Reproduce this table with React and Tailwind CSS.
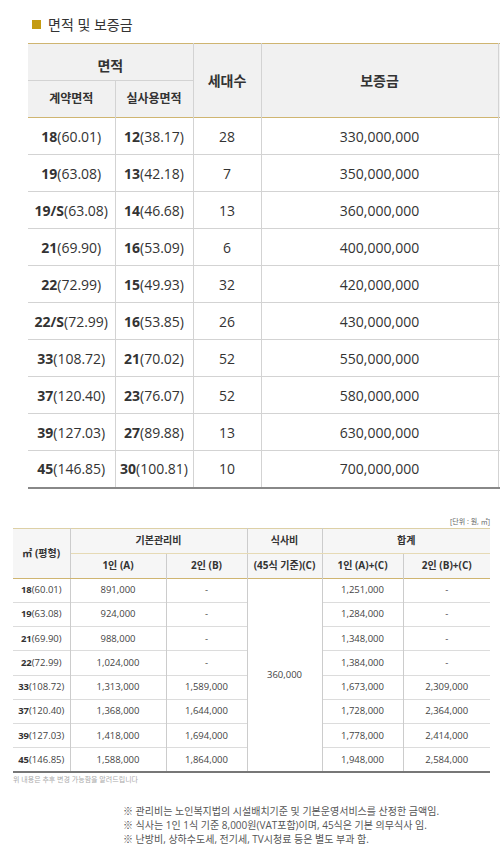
const areas = [
  { a: "18", aa: "60.01", b: "12", bb: "38.17", n: 28, dep: "330,000,000" },
  { a: "19", aa: "63.08", b: "13", bb: "42.18", n: 7, dep: "350,000,000" },
  { a: "19/S", aa: "63.08", b: "14", bb: "46.68", n: 13, dep: "360,000,000" },
  { a: "21", aa: "69.90", b: "16", bb: "53.09", n: 6, dep: "400,000,000" },
  { a: "22", aa: "72.99", b: "15", bb: "49.93", n: 32, dep: "420,000,000" },
  { a: "22/S", aa: "72.99", b: "16", bb: "53.85", n: 26, dep: "430,000,000" },
  { a: "33", aa: "108.72", b: "21", bb: "70.02", n: 52, dep: "550,000,000" },
  { a: "37", aa: "120.40", b: "23", bb: "76.07", n: 52, dep: "580,000,000" },
  { a: "39", aa: "127.03", b: "27", bb: "89.88", n: 13, dep: "630,000,000" },
  { a: "45", aa: "146.85", b: "30", bb: "100.81", n: 10, dep: "700,000,000" },
];

const fees = [
  { a: "18", aa: "60.01", one: "891,000", two: "-", t1: "1,251,000", t2: "-" },
  { a: "19", aa: "63.08", one: "924,000", two: "-", t1: "1,284,000", t2: "-" },
  { a: "21", aa: "69.90", one: "988,000", two: "-", t1: "1,348,000", t2: "-" },
  { a: "22", aa: "72.99", one: "1,024,000", two: "-", t1: "1,384,000", t2: "-" },
  { a: "33", aa: "108.72", one: "1,313,000", two: "1,589,000", t1: "1,673,000", t2: "2,309,000" },
  { a: "37", aa: "120.40", one: "1,368,000", two: "1,644,000", t1: "1,728,000", t2: "2,364,000" },
  { a: "39", aa: "127.03", one: "1,418,000", two: "1,694,000", t1: "1,778,000", t2: "2,414,000" },
  { a: "45", aa: "146.85", one: "1,588,000", two: "1,864,000", t1: "1,948,000", t2: "2,584,000" },
];

function App() {
  return (
    <div
      className="w-[500px] overflow-hidden bg-white text-[#333]"
      style={{ fontFamily: '"Open Sans", "Noto Sans CJK KR", sans-serif' }}
    >
      <div className="flex items-center gap-[7px] pl-[32px] pt-[15px] h-[43px] pb-[9px]">
        <span className="h-[9px] w-[9px] bg-[#c49b12]" />
        <h2 className="text-[14px] leading-none text-[#333]">면적 및 보증금</h2>
      </div>

      <div className="pl-[28px]">
        <table className="w-[540px] table-fixed border-collapse text-center">
          <colgroup>
            <col className="w-[87px]" />
            <col className="w-[78px]" />
            <col className="w-[68px]" />
            <col className="w-[237px]" />
            <col className="w-[70px]" />
          </colgroup>
          <thead className="bg-[#f1f1f1]">
            <tr className="h-[37px] border-t border-[#cfb571]">
              <th colSpan={2} className="border-r border-b border-[#d3d3d3] pt-[6px] text-[14px] font-bold">
                면적
              </th>
              <th rowSpan={2} className="border-x border-[#d3d3d3] text-[14px] font-bold">
                세대수
              </th>
              <th rowSpan={2} className="border-x border-[#d3d3d3] text-[14px] font-bold">
                보증금
              </th>
              <th rowSpan={2} className="border-l border-[#d3d3d3]" />
            </tr>
            <tr className="h-[37px] border-b border-[#cfb571]">
              <th className="border-r border-[#d3d3d3] text-[12px] font-bold">계약면적</th>
              <th className="border-r border-[#d3d3d3] text-[12px] font-bold">실사용면적</th>
            </tr>
          </thead>
          <tbody className="text-[14px]">
            {areas.map((r, i) => (
              <tr
                key={r.a + r.aa}
                className={`h-[37px] ${
                  i === areas.length - 1 ? "border-b-2 border-[#888]" : "border-b border-[#d3d3d3]"
                }`}
              >
                <td className="border-r border-[#d3d3d3]">
                  <b>{r.a}</b>({r.aa})
                </td>
                <td className="border-r border-[#d3d3d3]">
                  <b>{r.b}</b>({r.bb})
                </td>
                <td className="border-r border-[#d3d3d3]">{r.n}</td>
                <td className="border-r border-[#d3d3d3]">{r.dep}</td>
                <td />
              </tr>
            ))}
          </tbody>
        </table>
      </div>

      <div className="px-[10px] pt-[27px] text-right text-[7px] leading-[12px] text-[#666]">
        [단위 : 원, ㎡]
      </div>

      <div className="pl-[13px]">
        <table className="w-[477px] table-fixed border-collapse text-center text-[9.5px]">
          <colgroup>
            <col className="w-[57px]" />
            <col className="w-[96px]" />
            <col className="w-[81px]" />
            <col className="w-[75px]" />
            <col className="w-[81px]" />
            <col className="w-[87px]" />
          </colgroup>
          <thead className="bg-[#f6f6f6] text-[10px] font-bold">
            <tr className="h-[25px] border-t border-[#ddd0a6]">
              <th rowSpan={2} className="border-r border-b border-[#cccccc] border-b-[#cfb571]">
                ㎡ (평형)
              </th>
              <th colSpan={2} className="border-r border-b border-[#cccccc] border-b-[#e6dab5]">
                기본관리비
              </th>
              <th className="border-r border-b border-[#cccccc] border-b-[#e6dab5]">식사비</th>
              <th colSpan={2} className="border-b border-[#e6dab5]">
                합계
              </th>
            </tr>
            <tr className="h-[25px] border-b border-[#cfb571]">
              <th className="border-r border-[#cccccc]">1인 (A)</th>
              <th className="border-r border-[#cccccc]">2인 (B)</th>
              <th className="border-r border-[#cccccc]">(45식 기준)(C)</th>
              <th className="border-r border-[#cccccc]">1인 (A)+(C)</th>
              <th>2인 (B)+(C)</th>
            </tr>
          </thead>
          <tbody className="text-[#444]">
            {fees.map((r, i) => (
              <tr
                key={r.a}
                className={`h-[24.25px] ${
                  i === fees.length - 1 ? "border-b-2 border-[#777]" : "border-b border-[#dcdcdc]"
                }`}
              >
                <td className="border-r border-[#cccccc]">
                  <b className="text-[#333]">{r.a}</b>({r.aa})
                </td>
                <td className="border-r border-[#cccccc]">{r.one}</td>
                <td className="border-r border-[#cccccc]">{r.two}</td>
                {i === 0 && (
                  <td rowSpan={fees.length} className="border-r border-[#cccccc] bg-white">
                    360,000
                  </td>
                )}
                <td className="border-r border-[#cccccc]">{r.t1}</td>
                <td>{r.t2}</td>
              </tr>
            ))}
          </tbody>
        </table>
      </div>

      <p className="pl-[13px] pt-[2px] text-[7px] leading-[10px] text-[#aaa]">
        위 내용은 추후 변경 가능함을 알려드립니다
      </p>

      <div className="pl-[123px] pt-[19px] text-[10px] leading-[14px] text-[#555]">
        <p>※ 관리비는 노인복지법의 시설배치기준 및 기본운영서비스를 산정한 금액임.</p>
        <p>※ 식사는 1인 1식 기준 8,000원(VAT포함)이며, 45식은 기본 의무식사 임.</p>
        <p>※ 난방비, 상하수도세, 전기세, TV시청료 등은 별도 부과 함.</p>
      </div>
    </div>
  );
}

export default App;
